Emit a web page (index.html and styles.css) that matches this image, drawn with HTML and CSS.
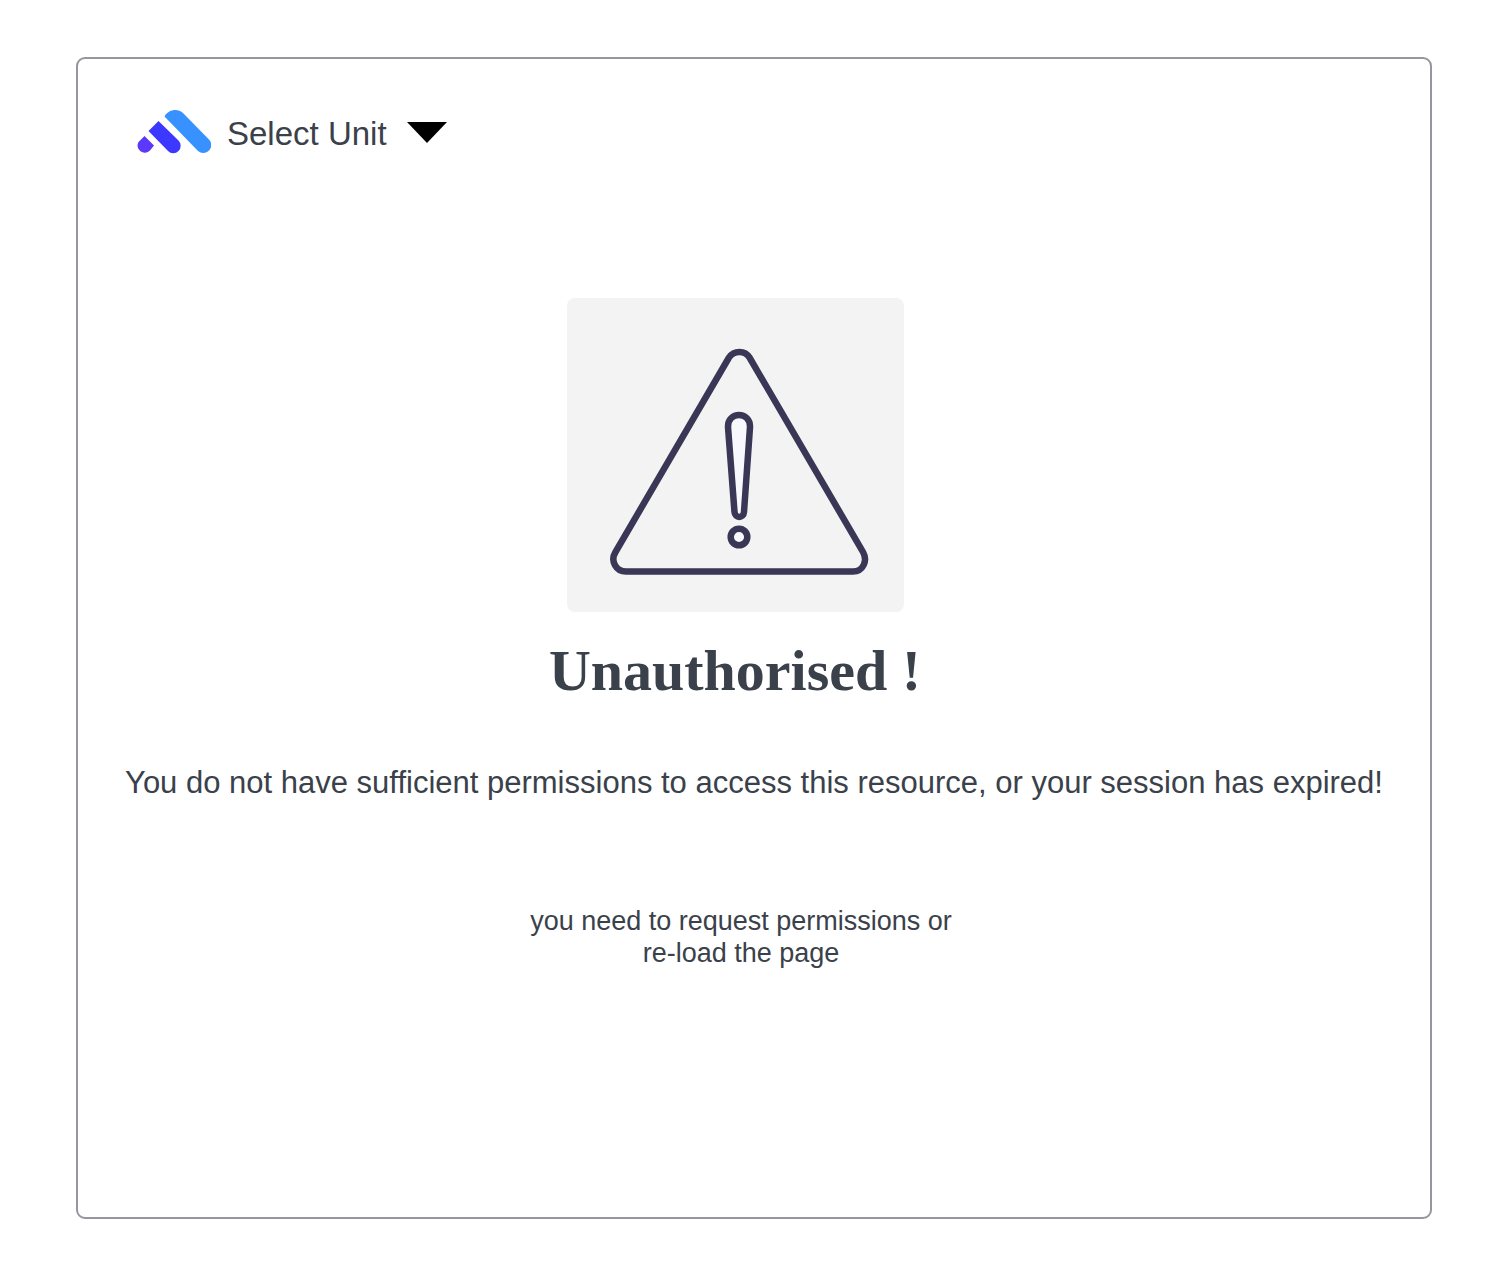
FILE: index.html
```html
<!DOCTYPE html>
<html lang="en">
<head>
<meta charset="utf-8">
<meta name="viewport" content="width=device-width, initial-scale=1">
<title>Unauthorised</title>
<link rel="stylesheet" href="styles.css">
</head>
<body>
<div class="card">
  <header class="topbar">
    <svg class="logo" viewBox="0 0 74 44" aria-hidden="true">
      <path fill="#5c37fc" d="M7.500 26 L17 35.500 L13 40.500 A7.200 7.200 0 0 1 1.500 32 Z"/>
      <path fill="#3c38ff" d="M21.500 11 L41.500 30.500 A7.400 7.400 0 0 1 31 41 L11.500 21 Z"/>
      <path fill="#3792ff" d="M27.500 6.500 C32 -1 41 -1.500 46 3 L71.500 29 A7.600 7.600 0 0 1 61 41 Z"/>
    </svg>
    <div class="unit">
      <select class="unit-select" aria-label="Unit"><option>Select Unit</option></select>
      <svg class="arrow" viewBox="0 0 40 21" aria-hidden="true"><path d="M0 0H40L20 21Z"/></svg>
    </div>
  </header>
  <main class="message">
    <div class="lead">
      <svg class="warning" viewBox="0 0 337 314" role="img" aria-label="Warning">
        <rect width="337" height="314" rx="8" fill="#f3f3f3"/>
        <g fill="none" stroke="#393656" stroke-width="6.500">
          <path d="M162 59.500 L48.500 254 C43 263 49 273.500 59 273.500 H286 C296 273.500 301 263 296 254 L182.500 59.500 C178 52 167 52 162 59.500 Z"/>
          <path fill="#f8f8fc" d="M161 129 C160.500 113 183.500 113 183 129 L177 214 C176.500 220.500 168 220.500 167.500 214 Z"/>
          <circle cx="172" cy="239" r="8.300" fill="#f8f8fc"/>
        </g>
      </svg>
      <h1 class="title">Unauthorised !</h1>
    </div>
    <p class="reason">You do not have sufficient permissions to access this resource, or your session has expired!</p>
    <p class="hint">you need to request permissions or<br>re-load the page</p>
  </main>
</div>
</body>
</html>
```
FILE: styles.css
```css
* { box-sizing: border-box; }

body {
  margin: 0;
  padding: 57px 65px 55px 76px;
  min-height: 100vh;
  display: flex;
  background: #fff;
  color: #3a414a;
  font-family: "Liberation Sans", Arial, sans-serif;
}

.card {
  flex: 1;
  min-width: 0;
  border: 2px solid #94979c;
  border-radius: 9px;
}

.topbar {
  display: flex;
  align-items: center;
  gap: 16px;
  padding: 51px 59px 0;
}

.logo { width: 74px; height: 44px; }

.unit { display: grid; align-items: center; }

.unit-select {
  grid-area: 1 / 1;
  appearance: none;
  width: 220px;
  height: 44px;
  padding: 2px 0 0;
  border: 0;
  background: none;
  color: inherit;
  font: 33px "Liberation Sans", Arial, sans-serif;
}

.arrow {
  grid-area: 1 / 1;
  justify-self: end;
  width: 40px;
  height: 21px;
  pointer-events: none;
}

.message {
  margin-top: 144px;
  text-align: center;
}

.lead {
  display: flex;
  flex-direction: column;
  align-items: center;
  padding-right: 38px;
}

.warning { width: 337px; height: 314px; }

.title {
  margin: 25px 0 0;
  font: bold 58px/68px "Liberation Serif", "Times New Roman", serif;
}

.reason {
  margin: 58px 0 0;
  font-size: 31px;
  line-height: 40px;
}

.hint {
  margin: 102px 0 0;
  padding-right: 26px;
  font-size: 27px;
  line-height: 32px;
}
```
